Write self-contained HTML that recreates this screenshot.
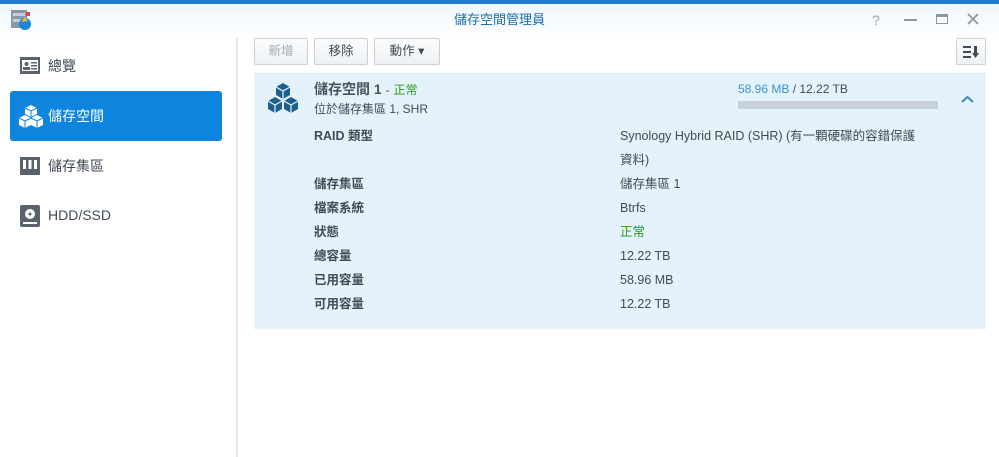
<!DOCTYPE html>
<html><head><meta charset="utf-8"><style>
*{margin:0;padding:0;box-sizing:border-box}
body{width:999px;height:457px;overflow:hidden;background:#fff;font-family:"Liberation Sans","Noto Sans CJK TC",sans-serif;font-size:12px;color:#3f4b56;position:relative;line-height:16px}
.abs{position:absolute;line-height:16px}
.top{left:0;top:0;width:999px;height:4px;background:#1d7ad1}
.hdr{left:0;top:4px;width:999px;height:34px;background:linear-gradient(#eef6fc,#fff)}
.title{left:0;width:999px;top:12px;text-align:center;color:#1b6da8;font-size:13px}
.nav{left:10px;width:212px;height:40px;font-size:14px;color:#404a55;line-height:40px;padding-left:38px}
.nav.sel{background:#0d84de;color:#fff;border-radius:3px}
.vline{left:236px;top:38px;width:2px;height:419px;background:#e8ebee}
.btn{top:38px;height:27px;border:1px solid #c9d0d6;border-radius:2px;background:linear-gradient(#fbfcfd,#eef1f3);font-size:12.5px;text-align:center;line-height:25px;color:#3f4b56}
.panel{left:254px;top:73px;width:732px;height:256px;background:#e4f2fb;border-top:1px solid #d5e6f2}
.lbl{left:314px;font-weight:bold;font-size:12.5px;color:#3f4b56}
.val{left:620px;font-size:12.5px;color:#3f4b56}
</style></head><body>
<div class="abs top"></div>
<div class="abs hdr"></div>
<svg class="abs" style="left:10px;top:9px" width="24" height="22"><rect x="1" y="1" width="16" height="18" fill="#8a97a5"/><rect x="3" y="4" width="12" height="3" fill="#c5ced6"/><rect x="3" y="10" width="12" height="3" fill="#c5ced6"/><circle cx="15" cy="15" r="6" fill="#1a86d8"/><path d="M11 13l4-5 3 4z" fill="#f5b82e"/><rect x="16" y="3" width="4" height="4" fill="#e2443b"/></svg>
<div class="abs title">儲存空間管理員</div>
<div class="abs" style="left:872px;top:12px;color:#9aa3ab;font-size:14px">?</div>
<div class="abs" style="left:904px;top:19px;width:13px;height:2px;background:#8d969e"></div>
<div class="abs" style="left:936px;top:14px;width:12px;height:10px;border:1.5px solid #8d969e;border-top-width:3px"></div>
<svg class="abs" style="left:967px;top:13px" width="12" height="12" stroke="#8d969e" stroke-width="1.6"><path d="M1 1L11 11M11 1L1 11"/></svg>

<div class="abs vline"></div>
<div class="abs nav" style="top:46px;line-height:40px">總覽</div>
<svg class="abs" style="left:19px;top:56px" width="22" height="20"><rect x="1" y="1" width="20" height="17" fill="#5a636d"/><rect x="3" y="4" width="16" height="11" fill="#fff"/><circle cx="7.5" cy="8" r="2" fill="#5a636d"/><rect x="4" y="11" width="7" height="3" fill="#5a636d"/><rect x="12" y="6" width="6" height="1.5" fill="#5a636d"/><rect x="12" y="9" width="6" height="1.5" fill="#5a636d"/><rect x="12" y="12" width="6" height="1.5" fill="#5a636d"/></svg>
<div class="abs nav sel" style="top:91px;height:50px;line-height:50px">儲存空間</div>
<svg class="abs" style="left:18px;top:104px" width="26" height="25"><g fill="#fff"><path d="M13 1l6 3v6l-6 3-6-3V4z"/><path d="M7 11l6 3v7l-6 3-6-3v-7z"/><path d="M19 11l6 3v7l-6 3-6-3v-7z"/></g><g stroke="#0d84de" stroke-width="1" fill="none"><path d="M7 4l6 3 6-3M13 7v6M1 14l6 3 6-3M7 17v7M13 14l6 3 6-3M19 17v7"/></g></svg>
<div class="abs nav" style="top:146px;line-height:40px">儲存集區</div>
<svg class="abs" style="left:19px;top:156px" width="22" height="20"><rect x="1" y="1" width="20" height="18" fill="#5a636d"/><rect x="4" y="4" width="3" height="9" fill="#fff"/><rect x="9.5" y="4" width="3" height="9" fill="#fff"/><rect x="15" y="4" width="3" height="9" fill="#fff"/></svg>
<div class="abs nav" style="top:195px;line-height:40px">HDD/SSD</div>
<svg class="abs" style="left:19px;top:204px" width="22" height="24"><rect x="1" y="1" width="20" height="22" rx="2" fill="#5a636d"/><circle cx="11" cy="10" r="5" fill="#fff"/><circle cx="11" cy="10" r="1.5" fill="#5a636d"/><rect x="4" y="18" width="14" height="2" fill="#fff"/></svg>

<div class="abs btn" style="left:254px;width:54px;color:#a2abb3;line-height:25px">新增</div>
<div class="abs btn" style="left:314px;width:54px;line-height:25px">移除</div>
<div class="abs btn" style="left:374px;width:66px;line-height:25px">動作 ▾</div>
<div class="abs btn" style="left:956px;width:30px;line-height:25px">
<svg width="18" height="14" style="margin-top:6px"><g fill="#3f4b56"><rect x="1" y="1" width="8" height="2"/><rect x="1" y="6" width="8" height="2"/><rect x="1" y="11" width="8" height="2"/><rect x="12" y="1" width="3" height="8"/><path d="M10 8h7l-3.5 5z"/></g></svg></div>

<div class="abs panel"></div>
<svg class="abs" style="left:266px;top:82px" width="34" height="34"><g fill="#1d5f8f"><path d="M17 1l7 4v8l-7 4-7-4V5z"/><path d="M9 15l7 4v8l-7 4-7-4v-8z"/><path d="M25 15l7 4v8l-7 4-7-4v-8z"/></g><g stroke="#e4f2fb" stroke-width="1.2" fill="none"><path d="M10 5l7 4 7-4M17 9v8M2 19l7 4 7-4M9 23v8M18 19l7 4 7-4M25 23v8"/></g></svg>
<div class="abs" style="left:314px;top:81px;font-size:14px;font-weight:bold;color:#4a5560">儲存空間 1 <span style="font-size:12px;font-weight:normal">-</span> <span style="color:#2a9a1a;font-size:12px;font-weight:normal">正常</span></div>
<div class="abs" style="left:314px;top:101px;font-size:12px">位於儲存集區 1, SHR</div>
<div class="abs" style="left:738px;top:81px;font-size:12px"><span style="color:#3b95c4">58.96 MB</span> / 12.22 TB</div>
<div class="abs" style="left:738px;top:101px;width:200px;height:8px;background:#c9d2da"></div>
<svg class="abs" style="left:961px;top:95px" width="13" height="9" stroke="#3a87bd" stroke-width="2" fill="none"><path d="M1 7l5.5-5 5.5 5"/></svg>

<div class="abs lbl" style="top:128px">RAID 類型</div>
<div class="abs val" style="top:128px">Synology Hybrid RAID (SHR) (有一顆硬碟的容錯保護</div>
<div class="abs val" style="top:152px">資料)</div>
<div class="abs lbl" style="top:176px">儲存集區</div><div class="abs val" style="top:176px">儲存集區 1</div>
<div class="abs lbl" style="top:200px">檔案系統</div><div class="abs val" style="top:200px">Btrfs</div>
<div class="abs lbl" style="top:224px">狀態</div><div class="abs val" style="top:224px;color:#2a9a1a">正常</div>
<div class="abs lbl" style="top:248px">總容量</div><div class="abs val" style="top:248px">12.22 TB</div>
<div class="abs lbl" style="top:272px">已用容量</div><div class="abs val" style="top:272px">58.96 MB</div>
<div class="abs lbl" style="top:296px">可用容量</div><div class="abs val" style="top:296px">12.22 TB</div>
</body></html>
